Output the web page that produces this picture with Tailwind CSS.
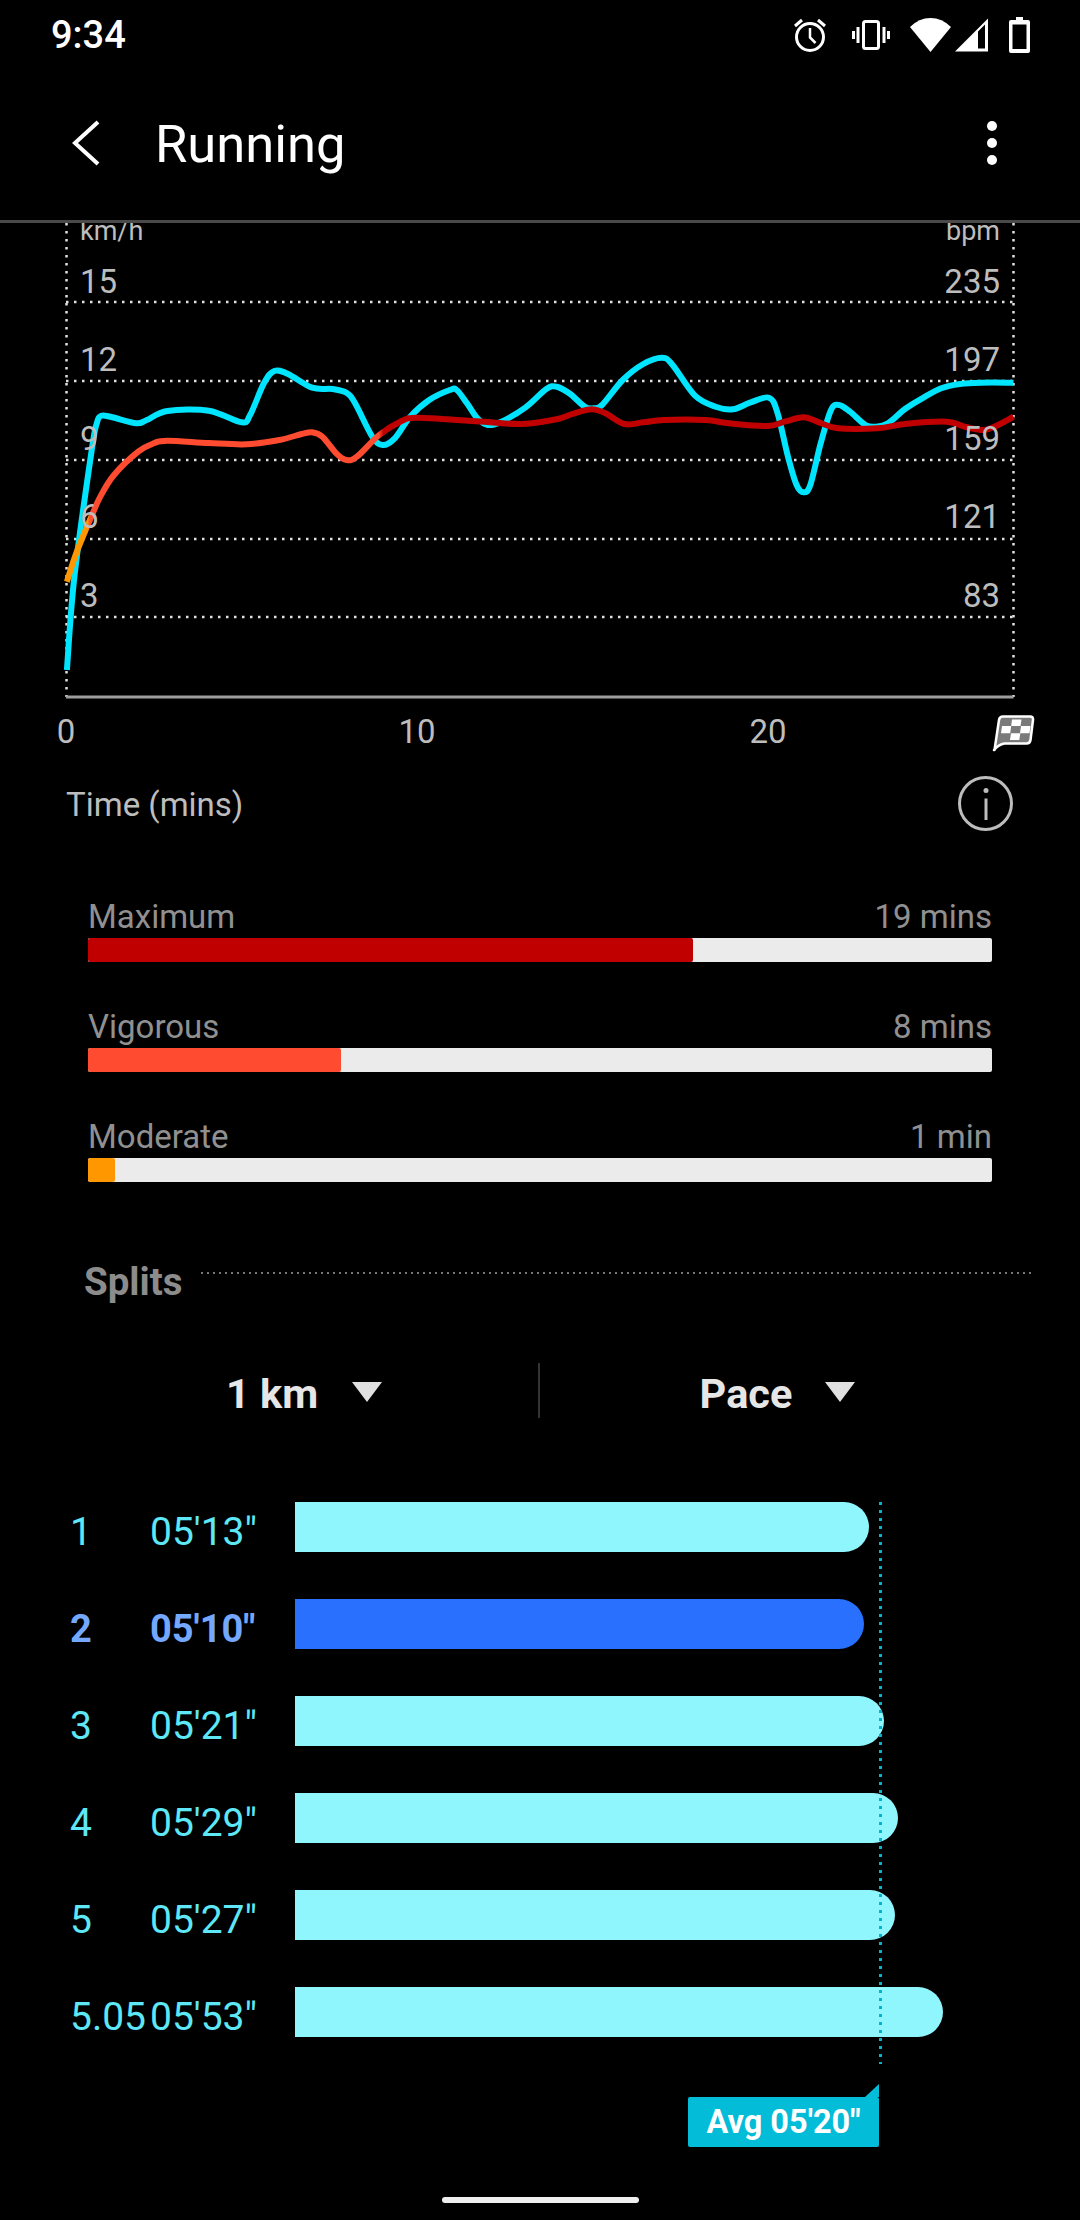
<!DOCTYPE html>
<html lang="en">
  <head>
    <meta charset="UTF-8" />
    <title>Running</title>
    <script src="https://cdn.jsdelivr.net/npm/@tailwindcss/browser@4"></script>
  </head>
  <body class="bg-black">
    <div class="relative flex h-[2220px] w-[1080px] flex-col overflow-hidden bg-black font-['Roboto',sans-serif]">
      <!-- Status bar -->
      <div class="flex h-[66px] items-center pl-[51px] pr-[50px] pt-[3px]">
        <span class="text-[38px] font-medium leading-none text-white">9:34</span>
        <svg class="ml-auto h-[36px] w-[34px]" viewBox="0 0 34 36" fill="none" stroke="#fff">
          <circle cx="17" cy="20" r="13.5" stroke-width="3" />
          <path d="M17 11v9.5l5.5 5.5" stroke-width="2.5" />
          <path d="M2 9l7-6M32 9l-7-6" stroke-width="3" />
        </svg>
        <svg class="ml-[25px] h-[30px] w-[38px]" viewBox="0 0 38 30" fill="none" stroke="#fff" stroke-width="3">
          <rect x="11.5" y="1.5" width="15" height="27" rx="2" />
          <path d="M6 7v16M32 7v16M1.5 11v8M36.5 11v8" />
        </svg>
        <svg class="ml-[20px] h-[34px] w-[41px]" viewBox="0 0 41 34" fill="#fff"><path d="M20.5 34L0 9Q9 0 20.5 0T41 9Z" /></svg>
        <svg class="ml-[4px] h-[34px] w-[33px]" viewBox="0 0 33 33" fill="#fff" fill-rule="evenodd"><path d="M33 0V33H0ZM23 13V30H30V6Z" /></svg>
        <svg class="ml-[21px] h-[36px] w-[21px]" viewBox="0 0 21 36" fill-rule="evenodd" fill="#fff"><path d="M7 0h7v3h5a2 2 0 0 1 2 2v29a2 2 0 0 1-2 2H2a2 2 0 0 1-2-2V5a2 2 0 0 1 2-2h5ZM3.500 7.500V32H17.500V7.500Z" /></svg>
      </div>

      <!-- App bar -->
      <div class="flex h-[154px] items-center pl-[72px] pr-[83px]">
        <svg class="h-[46px] w-[28px]" viewBox="0 0 28 46" fill="none" stroke="#fff" stroke-width="4"><path d="M26 2L3 23l23 21" /></svg>
        <span class="ml-[55px] mt-[3px] text-[52.5px] leading-none text-white">Running</span>
        <div class="ml-auto flex flex-col gap-[7px]">
          <span class="h-[10px] w-[10px] rounded-full bg-white"></span>
          <span class="h-[10px] w-[10px] rounded-full bg-white"></span>
          <span class="h-[10px] w-[10px] rounded-full bg-white"></span>
        </div>
      </div>
      <div class="h-[3px] bg-[#4a4a4a]"></div>

      <!-- Chart -->
      <svg class="block h-[553px] w-[1080px]" viewBox="0 223 1080 553" font-family="Roboto">
        <g stroke="#e0e0e0" stroke-width="2.5" stroke-dasharray="2.500 5.500" fill="none">
          <path d="M66.500 223V697M1013.500 223V697" />
          <path d="M66 302H1013M66 381H1013M66 460H1013M66 539H1013M66 617H1013" />
        </g>
        <path d="M66 697H1013.500" stroke="#9e9e9e" stroke-width="3" />
        <path id="speed" fill="none" stroke="#00e5ff" stroke-width="6" />
        <path id="hr" fill="none" stroke="url(#hrGrad)" stroke-width="6" />
        <defs>
          <linearGradient id="hrGrad" gradientUnits="userSpaceOnUse" x1="66" y1="0" x2="1014" y2="0">
            <stop offset="0.023" stop-color="#ff9800" />
            <stop offset="0.025" stop-color="#ff4b2f" />
            <stop offset="0.33" stop-color="#ff4b2f" />
            <stop offset="0.335" stop-color="#c00000" />
          </linearGradient>
        </defs>
        <g class="fill-[#bdbdbd] text-[33px]">
          <text x="80" y="240" class="text-[27px]">km/h</text>
          <text x="80" y="293">15</text>
          <text x="80" y="371">12</text>
          <text x="80" y="449.500">9</text>
          <text x="80" y="528">6</text>
          <text x="80" y="607">3</text>
          <g text-anchor="end">
            <text x="1000" y="240" class="text-[27px]">bpm</text>
            <text x="1000" y="293">235</text>
            <text x="1000" y="371">197</text>
            <text x="1000" y="449.500">159</text>
            <text x="1000" y="528">121</text>
            <text x="1000" y="607">83</text>
          </g>
          <g text-anchor="middle">
            <text x="66" y="743">0</text>
            <text x="417" y="743">10</text>
            <text x="768" y="743">20</text>
          </g>
        </g>
        <!-- Finish flag -->
        <path d="M994.500 750L999 720q.5-3.500 4-3.500h27q3.500 0 3 3.500l-2.500 20q-.5 3.500-4 3.500h-22q-6 1-10.500 6.500Z" fill="#7a7a7a" stroke="#fff" stroke-width="2.500" stroke-linejoin="round" />
        <path d="M1012 719.500h9.500l-1 6.500h-9.300ZM1002 726h9.200l-1 7.200h-9.200ZM1021 726h9.500l-1 7.200h-9.500ZM1011 733.200h9.300l-1 6.800h-9.300Z" fill="#fff" />
      </svg>

      <!-- Time in zones -->
      <div class="flex items-center justify-between pl-[66px] pr-[67px]">
        <span class="mt-[1px] text-[33px] leading-none text-[#bdbdbd]">Time (mins)</span>
        <span class="flex h-[55px] w-[55px] items-center justify-center rounded-full border-[3px] border-[#bdbdbd]">
          <svg class="h-[32px] w-[6px]" viewBox="0 0 6 32" fill="#bdbdbd"><circle cx="3" cy="2.500" r="2.500" /><rect x="1.500" y="10.500" width="3" height="21.500" /></svg>
        </span>
      </div>
      <div class="mt-[67px] flex flex-col gap-[46px] px-[88px]">
        <div>
          <div class="mb-[2px] flex h-[38px] items-center justify-between text-[33px] text-[#909090]"><span>Maximum</span><span>19 mins</span></div>
          <div class="flex h-[24px] overflow-hidden rounded-[2px] bg-[#ebebeb]"><div class="w-[605px] rounded-[2px] bg-[#c00000]"></div></div>
        </div>
        <div>
          <div class="mb-[2px] flex h-[38px] items-center justify-between text-[33px] text-[#909090]"><span>Vigorous</span><span>8 mins</span></div>
          <div class="flex h-[24px] overflow-hidden rounded-[2px] bg-[#ebebeb]"><div class="w-[253px] rounded-[2px] bg-[#ff4b2f]"></div></div>
        </div>
        <div>
          <div class="mb-[2px] flex h-[38px] items-center justify-between text-[33px] text-[#909090]"><span>Moderate</span><span>1 min</span></div>
          <div class="flex h-[24px] overflow-hidden rounded-[2px] bg-[#ebebeb]"><div class="w-[27px] rounded-[2px] bg-[#ff9800]"></div></div>
        </div>
      </div>

      <!-- Splits -->
      <div class="mt-[81px] flex h-[38px] items-start pl-[84px] pr-[47px]">
        <span class="text-[38.5px] font-bold leading-none text-[#8c8c8c]">Splits</span>
        <svg class="ml-[18px] mt-[9px] h-[2px] flex-1"><path d="M0 1H840" stroke="#777" stroke-width="2" stroke-dasharray="2 4" /></svg>
      </div>
      <div class="mt-[62px] flex h-[55px] items-center">
        <div class="flex w-[538px] items-center justify-center gap-[34px] pl-[70px]">
          <span class="mt-[6px] text-[41.5px] font-bold leading-none text-[#e6e6e6]">1 km</span>
          <span class="mt-[3px] h-0 w-0 border-x-[15px] border-t-[20px] border-x-transparent border-t-[#e0e0e0]"></span>
        </div>
        <div class="h-[55px] w-[2px] bg-[#333]"></div>
        <div class="flex flex-1 items-center justify-center gap-[33px] pr-[65px]">
          <span class="mt-[6px] text-[41.5px] font-bold leading-none text-[#e6e6e6]">Pace</span>
          <span class="mt-[3px] h-0 w-0 border-x-[15px] border-t-[20px] border-x-transparent border-t-[#e0e0e0]"></span>
        </div>
      </div>

      <div class="relative mt-[84px] flex flex-col gap-[47px] pl-[70px]">
        <div class="flex h-[50px] items-center text-[39px] text-[#5ee7f7]"><span class="w-[80px] pt-[10px]">1</span><span class="w-[145px] pt-[10px]">05'13"</span><div class="h-[50px] w-[574px] rounded-r-[25px] bg-[#90f6fe]"></div></div>
        <div class="flex h-[50px] items-center text-[38px] font-bold text-[#74a8ff]"><span class="w-[80px] pt-[10px]">2</span><span class="w-[145px] pt-[10px]">05'10"</span><div class="h-[50px] w-[569px] rounded-r-[25px] bg-[#2970ff]"></div></div>
        <div class="flex h-[50px] items-center text-[39px] text-[#5ee7f7]"><span class="w-[80px] pt-[10px]">3</span><span class="w-[145px] pt-[10px]">05'21"</span><div class="h-[50px] w-[589px] rounded-r-[25px] bg-[#90f6fe]"></div></div>
        <div class="flex h-[50px] items-center text-[39px] text-[#5ee7f7]"><span class="w-[80px] pt-[10px]">4</span><span class="w-[145px] pt-[10px]">05'29"</span><div class="h-[50px] w-[603px] rounded-r-[25px] bg-[#90f6fe]"></div></div>
        <div class="flex h-[50px] items-center text-[39px] text-[#5ee7f7]"><span class="w-[80px] pt-[10px]">5</span><span class="w-[145px] pt-[10px]">05'27"</span><div class="h-[50px] w-[600px] rounded-r-[25px] bg-[#90f6fe]"></div></div>
        <div class="flex h-[50px] items-center text-[39px] text-[#5ee7f7]"><span class="w-[80px] pt-[10px]">5.05</span><span class="w-[145px] pt-[10px]">05'53"</span><div class="h-[50px] w-[648px] rounded-r-[25px] bg-[#90f6fe]"></div></div>
        <!-- Average marker -->
        <svg class="absolute left-[879px] top-0 h-[562px] w-[3px]"><path d="M1.500 0V562" stroke="#02b4cc" stroke-width="3" stroke-dasharray="3 5" /></svg>
        <div class="absolute left-[688px] top-[595px] flex h-[50px] w-[191px] items-center justify-center rounded-[2px] bg-[#02bcd8] text-[32.5px] font-bold text-white">
          Avg 05'20"
          <span class="absolute bottom-full right-0 h-0 w-0 border-b-[13px] border-l-[14px] border-b-[#02bcd8] border-l-transparent"></span>
        </div>
      </div>

      <!-- Home indicator -->
      <div class="absolute bottom-[17px] left-[442px] h-[6px] w-[197px] rounded-full bg-[#eeeeee]"></div>
    </div>

    <script>
      // Catmull-Rom through the traced points, so the lines stay smooth
      function smooth(points) {
        let d = "M" + points[0].join(" ");
        for (let i = 0; i < points.length - 1; i++) {
          const p0 = points[i - 1] || points[i];
          const p1 = points[i];
          const p2 = points[i + 1];
          const p3 = points[i + 2] || p2;
          const c1 = [p1[0] + (p2[0] - p0[0]) / 6, p1[1] + (p2[1] - p0[1]) / 6];
          const c2 = [p2[0] - (p3[0] - p1[0]) / 6, p2[1] - (p3[1] - p1[1]) / 6];
          d += " C" + c1.join(" ") + " " + c2.join(" ") + " " + p2.join(" ");
        }
        return d;
      }
      const speed = [[66.9,670],[74.4,576.7],[91.7,450],[96.8,423.3],[101.3,415.7],[112.3,417.3],[136.4,423.3],[146.8,420],[167.4,411],[208.8,410.7],[241.5,422.3],[250.1,415],[263.9,383.3],[274.2,371],[288,374],[312.1,387.7],[332.7,389],[346.5,392.7],[355.1,403.3],[372.3,436.7],[382.7,445],[394.7,438.3],[410.2,416.7],[429.2,400],[449.8,390],[456.7,390],[467,403.3],[477.4,418.3],[487.7,425],[501.5,421.7],[525.6,407.3],[546.3,389],[556.6,386.7],[569.3,393.3],[584.8,406.7],[593.4,408.3],[602,405],[622.7,380],[643.3,364],[662.3,357.7],[672.6,365],[695,395.7],[715.6,406.7],[732.9,409.3],[750,402.7],[769,397.7],[777.6,413.3],[788,456.7],[796.6,485],[803.5,492.3],[810.3,485],[820.7,443.3],[831,410],[838.9,405],[850,411.7],[865.5,425],[875.8,426.7],[887.9,423.3],[905,409],[922.3,398.3],[941.2,388.3],[960,384],[980.8,382.7],[1013.5,382.7]];
      const hr = [[66.9,581.7],[76.2,553.3],[89.9,520],[100.3,496.7],[114,475],[138.2,451.7],[153.7,443.3],[167.4,440.7],[208.8,443],[246.6,444.3],[279.4,440],[301.7,434],[312.1,432.3],[322.4,436.7],[336.2,453.3],[346.5,460],[356.9,456.7],[379.2,435],[401.6,421],[415.4,417.7],[446.4,419.3],[487.7,422],[522.2,424],[556.6,419.3],[574.4,413.3],[591.7,409.3],[605.4,413.3],[624.4,424],[643.3,422.3],[664,420],[705.3,420],[729.4,423.3],[767.3,426],[784.5,421.7],[803.5,417.3],[819,422.3],[837.9,428.3],[877.5,428.3],[905,424],[946.4,421.7],[967,427.3],[984.2,430],[998,425],[1013.5,416.7]];
      document.getElementById("speed").setAttribute("d", smooth(speed));
      document.getElementById("hr").setAttribute("d", smooth(hr));
    </script>
  </body>
</html>
